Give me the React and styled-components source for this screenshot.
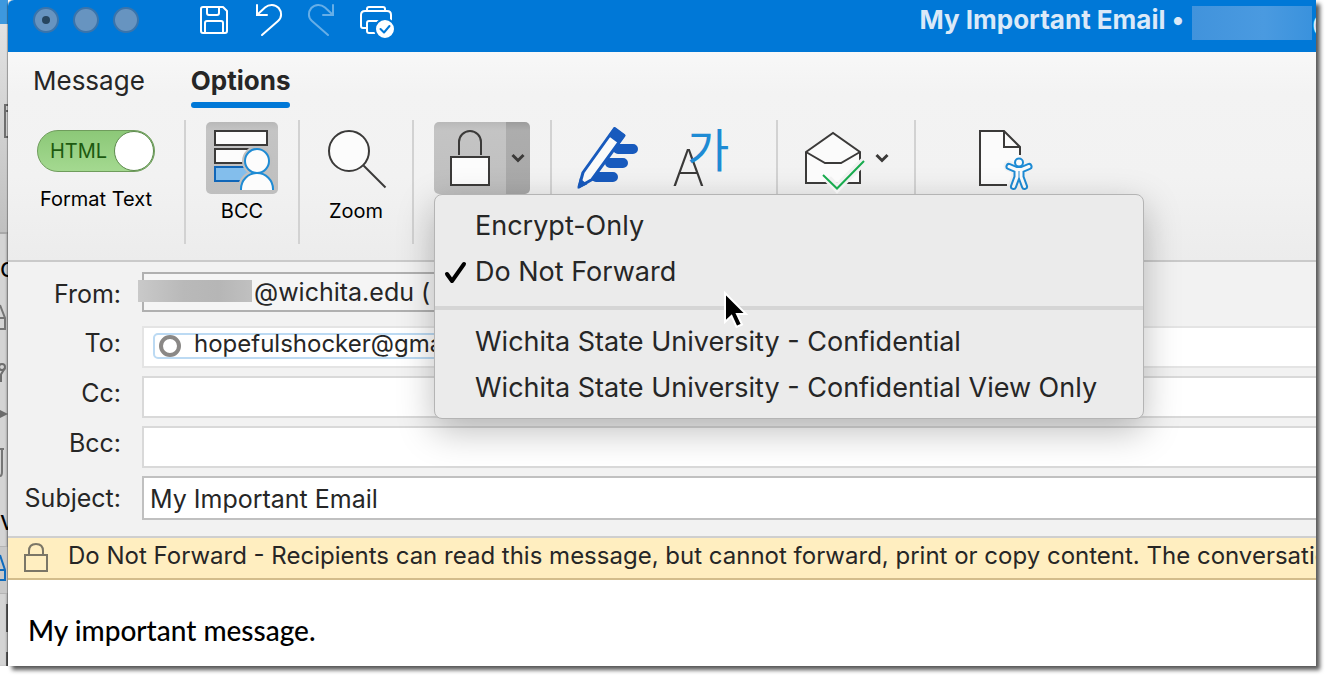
import React from 'react';
import styled, {createGlobalStyle, css} from 'styled-components';

const GlobalStyle = createGlobalStyle`
    *{
        box-sizing: border-box;
    }
    body{
        margin: 0;
        background: #ffffff;
        font-family: Inter, "Liberation Sans", sans-serif;
        color: #262626;
    }
    button, input{
        font: inherit;
        color: inherit;
    }
`;

const Desktop = styled.div`
    display: flex;
    min-height: 100vh;
    padding: 0 15px 15px 0;
`;

/* the window that sits behind the message */
const Behind = styled.aside`
    flex: 0 0 8px;
    display: flex;
    flex-direction: column;
    overflow: hidden;
    background: #d4d4d4;
    box-shadow: inset -2px 0 2px rgba(0,0,0,0.15);

    svg{
        display: block;
    }
`;

const BehindTitle = styled.div`
    height: 24px;
    background: #3d98de;
`;

const BehindRibbon = styled.div`
    height: 210px;
    padding-top: 78px;
    background: linear-gradient(#e2e2e2, #c0c0c0);
    border-bottom: 2px solid #a8a8a8;
`;

const BehindRow = styled.div`
    display: flex;
    align-items: center;
    height: ${(p) => p.$height}px;
    font-size: 26px;
    color: #000000;
    overflow: hidden;
    ${(p) => p.$active && css`
        background: #c8c8c8;
        border-top: 1px solid #b4b4b4;
        border-bottom: 1px solid #b4b4b4;
    `}
`;

const Window = styled.main`
    flex: 1;
    min-width: 0;
    display: flex;
    flex-direction: column;
    background: #ffffff;
    border-top-left-radius: 6px;
    box-shadow: 4px 4px 4px rgba(0,0,0,0.65), -1px 0 1px rgba(0,0,0,0.3);
`;

const TitleBar = styled.header`
    display: flex;
    align-items: center;
    height: 52px;
    padding: 0 0 12px 25px;
    background: #0078d7;
    border-top-left-radius: 6px;
    overflow: hidden;
`;

const Lights = styled.div`
    display: flex;
    gap: 14px;
    margin-right: 57px;
`;

const Light = styled.button`
    display: flex;
    align-items: center;
    justify-content: center;
    width: 26px;
    height: 26px;
    padding: 0;
    border: 2px solid #3a74ab;
    border-radius: 50%;
    background: #6794c0;

    &::after{
        content: '';
        width: 8px;
        height: 8px;
        border-radius: 50%;
        background: ${(p) => (p.$dot ? '#27465f' : 'transparent')};
    }
`;

const QuickTools = styled.div`
    display: flex;
    gap: 18px;
`;

const QuickButton = styled.button`
    width: 36px;
    height: 40px;
    padding: 0;
    border: none;
    background: transparent;
    color: #ffffff;
    opacity: ${(p) => (p.disabled ? 0.4 : 1)};

    svg{
        display: block;
    }
`;

const Title = styled.h1`
    display: flex;
    align-items: center;
    gap: 8px;
    margin: 0 0 0 auto;
    font-size: 26px;
    line-height: 40px;
    font-weight: 700;
    color: #dbe9f8;
    white-space: nowrap;
`;

const Account = styled.span`
    display: flex;
    align-items: center;
    padding-top: 6px;
`;

const HiddenName = styled.span`
    width: 120px;
    height: 34px;
    background: linear-gradient(90deg, #4193dc, #4a9ae0 60%, #3a92dd);
`;

const Domain = styled.span`
    width: 4px;
    overflow: hidden;
    font-weight: 400;
`;

const Ribbon = styled.section`
    position: relative;
    z-index: 2;
    height: 210px;
    background: linear-gradient(#f8f8f8, #f3f3f3 20%, #f2f2f2 60%, #ececec);
    border-bottom: 2px solid #cacaca;
`;

const Tabs = styled.nav`
    display: flex;
    gap: 46px;
    padding: 10px 25px 0;
    height: 68px;
`;

const Tab = styled.button`
    height: 46px;
    padding: 0;
    border: none;
    border-bottom: 8px solid transparent;
    background: transparent;
    font-size: 26px;
    line-height: 38px;
    position: relative;
    ${(p) => p.$active && css`
        font-weight: 700;

        &::after{
            content: '';
            position: absolute;
            left: 0;
            right: 0;
            top: 40px;
            height: 6px;
            border-radius: 3px;
            background: #0078d7;
        }
    `}
`;

const Groups = styled.div`
    display: flex;
    height: 124px;
`;

const Group = styled.div`
    display: flex;
    gap: 20px;
    padding: 2px ${(p) => p.$right || 20}px 0 ${(p) => p.$left || 20}px;
    border-right: ${(p) => (p.$last ? 'none' : '2px solid #d2d2d2')};
`;

const Tool = styled.div`
    display: flex;
    flex-direction: column;
    align-items: center;
    min-width: 72px;
    gap: 5px;
    font-size: 20px;
    line-height: 24px;
    color: #000000;
`;

const ToggleTool = styled.label`
    display: flex;
    flex-direction: column;
    align-items: center;
    width: 136px;
    padding-top: 8px;
    gap: 15px;
    font-size: 20px;
    line-height: 24px;
    color: #000000;
    white-space: nowrap;
`;

const Switch = styled.span`
    position: relative;
    display: flex;
    align-items: center;
    justify-content: space-between;
    width: 118px;
    height: 42px;
    padding-left: 12px;
    border: 1px solid #6f9c5c;
    border-radius: 21px;
    background: linear-gradient(#8cc878, #a4d990);
    color: #1d5a10;

    input{
        position: absolute;
        inset: 0;
        margin: 0;
        opacity: 0;
    }
`;

const Knob = styled.span`
    width: 40px;
    height: 40px;
    border: 1px solid #5d8a4d;
    border-radius: 50%;
    background: #ffffff;
`;

const IconButton = styled.button`
    width: 72px;
    height: 72px;
    padding: 0;
    border: none;
    border-radius: ${(p) => (p.$split ? '5px 0 0 5px' : '5px')};
    background: ${(p) => (p.$pressed ? 'linear-gradient(#b8b8b8, #c4c4c4 12%, #bfbfbf)' : 'transparent')};

    svg{
        display: block;
    }
`;

const Split = styled.div`
    position: relative;
    display: flex;
    height: 72px;
`;

const ArrowButton = styled.button`
    display: flex;
    align-items: center;
    justify-content: center;
    width: 24px;
    height: 72px;
    padding: 0;
    border: none;
    border-radius: 0 5px 5px 0;
    background: ${(p) => (p.$pressed ? 'linear-gradient(#9c9c9c, #adadad 12%, #a8a8a8)' : 'transparent')};
`;

const Menu = styled.div`
    position: absolute;
    top: 72px;
    left: 0;
    width: max-content;
    padding: 8px 0 7px;
    border: 1px solid #b4b4b4;
    border-radius: 8px;
    background: #ebebeb;
    box-shadow: 0 12px 36px rgba(0,0,0,0.26);
`;

const MenuItem = styled.button`
    display: grid;
    grid-template-columns: 28px auto;
    gap: 4px;
    align-items: center;
    width: 100%;
    height: 46px;
    padding: 0 46px 0 8px;
    border: none;
    background: transparent;
    font-size: 27px;
    line-height: 32px;
    text-align: left;
    white-space: nowrap;

    svg{
        display: block;
        margin-top: 2px;
    }
`;

const MenuRule = styled.hr`
    height: 4px;
    margin: 11px 0 9px;
    border: none;
    background: #d5d5d5;
`;

const Pointer = styled.svg`
    position: absolute;
    left: 287px;
    top: 96px;
`;

const Fields = styled.form`
    display: grid;
    grid-template-columns: 113px 1fr;
    column-gap: 21px;
    row-gap: 8px;
    padding: 10px 0 16px;
    background: #f2f2f2;
    font-size: 25px;
`;

const FieldLabel = styled.label`
    line-height: 34px;
    padding-top: ${(p) => (p.$strong ? 5 : 0)}px;
    text-align: right;
    white-space: nowrap;
`;

const FromBox = styled.button`
    display: flex;
    align-items: center;
    gap: 2px;
    width: 600px;
    height: 40px;
    margin-bottom: 6px;
    padding: 0;
    border: 2px solid #b0b0b0;
    background: #f5f5f5;
    text-align: left;
`;

const HiddenUser = styled.span`
    width: 114px;
    height: 22px;
    margin: 0 0 2px -6px;
    background: linear-gradient(90deg, #c9c9c9, #b9b9b9 40%, #b6b6b6 70%, #c0c0c0);
`;

const TextField = styled.input`
    width: 100%;
    height: ${(p) => (p.$strong ? 44 : 42)}px;
    padding: 2px 6px 0;
    border: 2px solid ${(p) => (p.$strong ? '#c0c0c0' : '#d9d9d9')};
    border-right: none;
    border-radius: 0;
    background: #ffffff;
    outline: none;
`;

const Recipients = styled.div`
    display: flex;
    align-items: center;
    height: 42px;
    padding: 0 0 2px 9px;
    border: 2px solid #e4e4e4;
    border-right: none;
    background: #ffffff;

    input{
        flex: 1;
        min-width: 0;
        height: 30px;
        border: none;
        outline: none;
        background: transparent;
    }
`;

const Chip = styled.span`
    display: flex;
    align-items: center;
    gap: 13px;
    height: 26px;
    padding: 0 8px 0 4px;
    border: 2px solid #bcdaf3;
    border-radius: 5px;
    font-size: 24px;
    line-height: 22px;

    span{
        padding-bottom: 4px;
    }
`;

const Ring = styled.i`
    width: 22px;
    height: 22px;
    border: 4px solid #8a8886;
    border-radius: 50%;
`;

const Notice = styled.div`
    display: flex;
    align-items: center;
    gap: 20px;
    height: 44px;
    padding: 0 0 0 16px;
    border-top: 2px solid #cfcfcf;
    border-bottom: 2px solid #d3bd8c;
    background: #ffeec0;
    font-size: 24px;
    line-height: 30px;
    white-space: nowrap;
    overflow: hidden;

    svg{
        flex: none;
    }
    p{
        margin: 0 0 4px;
    }
`;

const Body = styled.article`
    flex: 1;
    padding: 32px 20px 0;
    font-family: Lato, sans-serif;
    font-size: 28px;
    line-height: 36px;
    font-weight: 500;
    color: #000000;

    p{
        margin: 0;
    }
`;

const line = {fill: 'none', stroke: 'currentColor', strokeWidth: 2, strokeLinejoin: 'round', strokeLinecap: 'round'};
const dark = '#3b3a39';

const SaveIcon = () => (
    <svg width="36" height="40" {...line}>
        <path d="M7 7H27L31 11V31Q31 33 29 33H7Q5 33 5 31V9Q5 7 7 7Z"/>
        <path d="M11 7V13Q11 15 13 15H21Q23 15 23 13V7M9 33V23Q9 21 11 21H25Q27 21 27 23V33"/>
    </svg>
);

const UndoIcon = ({flip}) => (
    <svg width="36" height="40" {...line} strokeLinejoin="miter">
        <g transform={flip ? 'translate(36 0) scale(-1 1)' : undefined}>
            <path d="M7 5V15H17"/>
            <path d="M7 15L15 7.500C19 4 25 4 28.700 8C32 12 32 17.500 28 21L12 35"/>
        </g>
    </svg>
);

const PrintIcon = () => (
    <svg width="36" height="40" {...line}>
        <path d="M9 11V9Q9 7 11 7H25Q27 7 27 9V11"/>
        <path d="M9 28H5Q3 28 3 26V15Q3 11 7 11H29Q33 11 33 15V22"/>
        <path d="M22 21H11Q9 21 9 23V31Q9 33 11 33H18"/>
        <circle cx="27" cy="29" r="10" fill="#ffffff" stroke="#0078d7"/>
        <path d="M22.500 29L26 32.500L31.500 26" stroke="#0078d7"/>
    </svg>
);

const BccIcon = () => (
    <svg width="72" height="72" fill="#fcfcfc" stroke={dark} strokeWidth="2">
        <rect x="9" y="9" width="52" height="14"/>
        <rect x="9" y="27" width="52" height="14"/>
        <rect x="9" y="45" width="52" height="14" fill="#83beec" stroke="#1066b8"/>
        <path d="M35 68V66A16 15 0 0 1 67 66V68" fill="#c0c0c0" stroke="#c0c0c0" strokeWidth="6"/>
        <circle cx="51" cy="39" r="12" stroke="#c0c0c0" strokeWidth="6"/>
        <path d="M46 26H62V42H66V62H58Z" fill="#c0c0c0" stroke="none"/>
        <path d="M35 68V67A16 16 0 0 1 67 67V68" stroke="#1e8bd4"/>
        <circle cx="51" cy="39" r="12" stroke="#1e8bd4"/>
    </svg>
);

const ZoomIcon = () => (
    <svg width="72" height="72" fill="#fcfcfc" stroke={dark} strokeWidth="2">
        <circle cx="29" cy="29" r="20"/>
        <path d="M43.500 43.500L65.500 65.500"/>
    </svg>
);

const LockIcon = () => (
    <svg width="72" height="72" fill="none" stroke={dark} strokeWidth="2">
        <path d="M25 33V20A11 11 0 0 1 47 20V33"/>
        <rect x="17" y="35" width="38" height="28" fill="#fcfcfc"/>
    </svg>
);

const PencilIcon = () => (
    <svg width="72" height="72" fill="none" stroke="#185abd">
        <path d="M46 27H61M38 41H51M24 55H41" strokeWidth="10" strokeLinecap="round"/>
        <path d="M42.500 6.500L11 50.500L7 65L20 57.500L52 13.500Z" fill="#fafafa" strokeWidth="3" strokeLinejoin="round"/>
        <path d="M42.500 6.500L37.500 13.500L47 20.500L52 13.500ZM8.500 58L7 65L13.500 62Z" fill="#185abd" strokeWidth="2"/>
    </svg>
);

const TranslateIcon = () => (
    <svg width="72" height="72">
        <text x="8" y="64" fontSize="50" fontWeight="200" fill={dark}>A</text>
        <text x="23" y="45" fontSize="46" fontWeight="400" fontFamily="Noto Sans CJK KR" fill="#1e8bd4">가</text>
    </svg>
);

const EnvelopeIcon = () => (
    <svg width="72" height="72" fill="#fbfbfb" stroke={dark} strokeWidth="2">
        <path d="M8 30L35 11L62 30V61H8Z"/>
        <path d="M8 30L27 41H43L62 30" fill="none"/>
        <path d="M30 57L39 66L66 39" fill="none" stroke="#f2f2f2" strokeWidth="8"/>
        <path d="M25 53L39 66.500L66 39" fill="none" stroke="#18ab4e"/>
    </svg>
);

const PageIcon = () => (
    <svg width="72" height="72" fill="none" stroke={dark} strokeWidth="2">
        <path d="M10 9H34L50 25V60L36 63H10Z" fill="#fbfbfb" stroke="none"/>
        <path d="M50 33V25L34 9H10V63H37M34 9V25H50"/>
        <g strokeLinecap="round" strokeLinejoin="round">
            <path d="M39 44L49 48L59 44M47 48V54L43.500 64M51 48V54L54.500 64" stroke="#f2f2f2" strokeWidth="11"/>
            <path d="M39 44.500L46 47.500H52L59 44.500M47 48V55L43.500 64.500M51 48V55L54.500 64.500" stroke="#1e8bd4" strokeWidth="7"/>
            <circle cx="49" cy="40.500" r="4" fill="#fbfbfb" stroke="#1e8bd4"/>
            <path d="M39 44.500L46 47.500H52L59 44.500M47 48V55L43.500 64.500M51 48V55L54.500 64.500" stroke="#fbfbfb" strokeWidth="3"/>
        </g>
    </svg>
);

const Chevron = () => (
    <svg width="14" height="10" fill="none" stroke={dark} strokeWidth="3">
        <path d="M1.500 2L7 7.500L12.500 2"/>
    </svg>
);

const CheckIcon = () => (
    <svg width="28" height="26" fill="none" stroke="#000000" strokeWidth="4" strokeLinecap="round" strokeLinejoin="round">
        <path d="M4 14L9 21L21 4"/>
    </svg>
);

const menuItems = [
    ['Encrypt-Only', 'Do Not Forward'],
    ['Wichita State University - Confidential', 'Wichita State University - Confidential View Only'],
];

const ProtectMenu = ({selected}) => (
    <Menu role="menu">
        {menuItems.map((group, i) => (
            <React.Fragment key={i}>
                {i > 0 && <MenuRule/>}
                {group.map((name) => (
                    <MenuItem key={name} type="button" role="menuitemradio" aria-checked={name === selected}>
                        <span>{name === selected && <CheckIcon/>}</span>
                        <span>{name}</span>
                    </MenuItem>
                ))}
            </React.Fragment>
        ))}
        <Pointer width="28" height="40">
            <path d="M3 2V31L9.500 25L14.500 36L20 33.500L15 23H24Z" fill="#000000" stroke="#ffffff" strokeWidth="2"/>
        </Pointer>
    </Menu>
);

const BehindWindow = () => (
    <Behind aria-hidden="true">
        <BehindTitle/>
        <BehindRibbon>
            <svg width="8" height="40" fill="none" stroke="#6e6e6e" strokeWidth="2">
                <path d="M8 3H5V35H8M5 9H8"/>
            </svg>
        </BehindRibbon>
        <BehindRow $height={66}>c</BehindRow>
        <BehindRow $height={50}>
            <svg width="8" height="50" fill="none" stroke="#757575" strokeWidth="2"><path d="M0 5L5 18V29H0M0 18H5"/></svg>
        </BehindRow>
        <BehindRow $height={48}>
            <svg width="8" height="48" fill="none" stroke="#6e6e6e" strokeWidth="2"><circle cx="2" cy="17" r="3"/><path d="M0 26L5 18M1 25V32"/></svg>
        </BehindRow>
        <BehindRow $height={32}>
            <svg width="8" height="32" fill="#6b6b6b"><path d="M0 12L8 16L0 20Z"/></svg>
        </BehindRow>
        <BehindRow $height={64}>
            <svg width="8" height="64" fill="none" stroke="#757575" strokeWidth="2"><path d="M0 19H4M2 19V42Q2 46 0 46"/></svg>
        </BehindRow>
        <BehindRow $height={52}>v</BehindRow>
        <BehindRow $height={48} $active>
            <svg width="8" height="48" fill="none" stroke="#0f6cbd" strokeWidth="2"><path d="M0 9L5 24V34H0M0 24H5"/></svg>
        </BehindRow>
        <BehindRow $height={72}>
            <svg width="8" height="72" fill="#555555"><path d="M6 10H8V38H6ZM6 58H8V72H6Z"/></svg>
        </BehindRow>
    </Behind>
);

const App = () => {
    return (
        <Desktop>
            <GlobalStyle/>
            <BehindWindow/>
            <Window>
                <TitleBar>
                    <Lights>
                        <Light $dot aria-label="Close"/>
                        <Light aria-label="Minimize"/>
                        <Light aria-label="Full screen"/>
                    </Lights>
                    <QuickTools>
                        <QuickButton aria-label="Save"><SaveIcon/></QuickButton>
                        <QuickButton aria-label="Undo"><UndoIcon/></QuickButton>
                        <QuickButton aria-label="Redo" disabled><UndoIcon flip/></QuickButton>
                        <QuickButton aria-label="Print"><PrintIcon/></QuickButton>
                    </QuickTools>
                    <Title>
                        <span>My Important Email •</span>
                        <Account>
                            <HiddenName/>
                            <Domain>@</Domain>
                        </Account>
                    </Title>
                </TitleBar>

                <Ribbon>
                    <Tabs>
                        <Tab type="button">Message</Tab>
                        <Tab type="button" $active>Options</Tab>
                    </Tabs>
                    <Groups>
                        <Group>
                            <ToggleTool>
                                <Switch>
                                    <input type="checkbox" defaultChecked/>
                                    HTML
                                    <Knob/>
                                </Switch>
                                Format Text
                            </ToggleTool>
                        </Group>
                        <Group>
                            <Tool>
                                <IconButton $pressed aria-labelledby="bcc-tool"><BccIcon/></IconButton>
                                <span id="bcc-tool">BCC</span>
                            </Tool>
                        </Group>
                        <Group>
                            <Tool>
                                <IconButton aria-labelledby="zoom-tool"><ZoomIcon/></IconButton>
                                <span id="zoom-tool">Zoom</span>
                            </Tool>
                        </Group>
                        <Group>
                            <Split>
                                <IconButton $pressed $split aria-label="Encrypt"><LockIcon/></IconButton>
                                <ArrowButton $pressed aria-label="Encrypt options" aria-expanded="true"><Chevron/></ArrowButton>
                                <ProtectMenu selected="Do Not Forward"/>
                            </Split>
                        </Group>
                        <Group $right={40}>
                            <IconButton aria-label="Editor"><PencilIcon/></IconButton>
                            <IconButton aria-label="Language"><TranslateIcon/></IconButton>
                        </Group>
                        <Group>
                            <Split>
                                <IconButton aria-label="Request receipts"><EnvelopeIcon/></IconButton>
                                <ArrowButton aria-label="Receipt options"><Chevron/></ArrowButton>
                            </Split>
                        </Group>
                        <Group $left={54} $last>
                            <IconButton aria-label="Check accessibility"><PageIcon/></IconButton>
                        </Group>
                    </Groups>
                </Ribbon>

                <Fields>
                    <FieldLabel htmlFor="from" $strong>From:</FieldLabel>
                    <FromBox id="from" type="button">
                        <HiddenUser/>
                        @wichita.edu (
                    </FromBox>
                    <FieldLabel htmlFor="to">To:</FieldLabel>
                    <Recipients>
                        <Chip>
                            <Ring/>
                            <span>hopefulshocker@gmail.com</span>
                        </Chip>
                        <input id="to" type="text"/>
                    </Recipients>
                    <FieldLabel htmlFor="cc">Cc:</FieldLabel>
                    <TextField id="cc" type="text"/>
                    <FieldLabel htmlFor="bcc">Bcc:</FieldLabel>
                    <TextField id="bcc" type="text"/>
                    <FieldLabel htmlFor="subject" $strong>Subject:</FieldLabel>
                    <TextField id="subject" type="text" $strong defaultValue="My Important Email"/>
                </Fields>

                <Notice>
                    <svg width="24" height="30" fill="none" stroke="#7b7667" strokeWidth="2">
                        <path d="M5 12V8Q5 1 12 1Q19 1 19 8V12"/>
                        <rect x="1" y="12" width="22" height="16"/>
                    </svg>
                    <p>Do Not Forward - Recipients can read this message, but cannot forward, print or copy content. The conversation</p>
                </Notice>

                <Body>
                    <p>My important message.</p>
                </Body>
            </Window>
        </Desktop>
    );
};

export default App;
